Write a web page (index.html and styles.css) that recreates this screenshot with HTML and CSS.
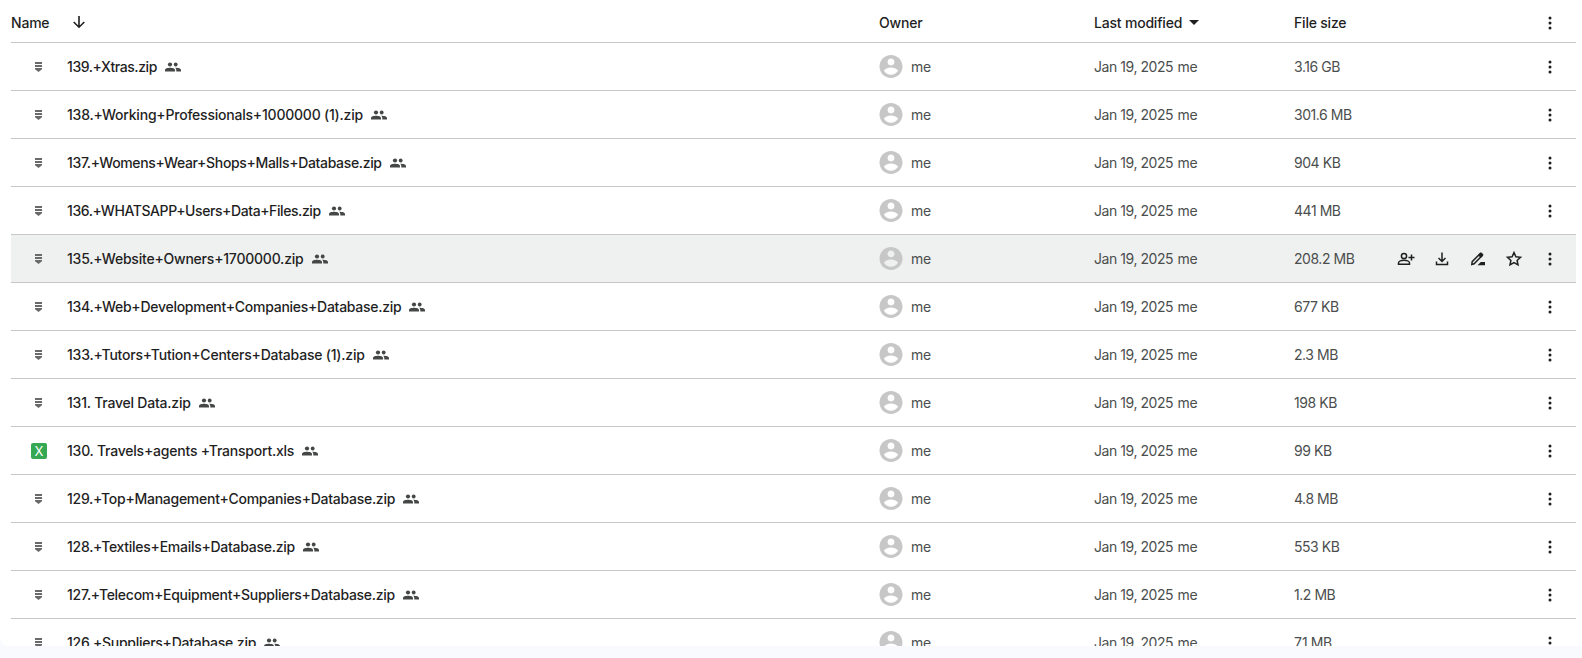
FILE: index.html
```html
<!DOCTYPE html>
<html lang="en">
<head>
  <meta charset="UTF-8" />
  <meta name="viewport" content="width=device-width, initial-scale=1.0"/>
  <title>Drive Files</title>
  <link rel="stylesheet" href="styles.css">
</head>
<body>

  <!-- icons used by the rows -->
  <svg class="sprite" xmlns="http://www.w3.org/2000/svg">
    <symbol id="zip" viewBox="0 0 16 16"><path d="M4 3h7v2H4zM4 6h7v2H4zM4 9h7v1.300L7.500 13 4 10.300z"/></symbol>
    <symbol id="people" viewBox="0 0 16 16"><circle cx="5" cy="5.500" r="2.100"/><circle cx="10.700" cy="5.500" r="1.900"/><path d="M0 12.500v-1.500C0 9.400 2.800 8.700 5 8.700s5 .7 5 2.300v1.500zM11.300 12.500v-1.500c0-.9-.4-1.700-1.100-2.200 2.300-.1 5.800.6 5.800 2.200v1.500z"/></symbol>
    <symbol id="user" viewBox="2 2 20 20"><path d="M12 2C6.480 2 2 6.480 2 12s4.480 10 10 10 10-4.480 10-10S17.520 2 12 2zm0 3c1.660 0 3 1.340 3 3s-1.340 3-3 3-3-1.340-3-3 1.340-3 3-3zm0 14.200c-2.500 0-4.710-1.280-6-3.220.03-1.990 4-3.080 6-3.080 1.990 0 5.970 1.090 6 3.080-1.290 1.940-3.500 3.220-6 3.220z"/></symbol>
    <symbol id="more" viewBox="0 0 20 20"><circle cx="10" cy="5" r="1.500"/><circle cx="10" cy="10" r="1.500"/><circle cx="10" cy="15" r="1.500"/></symbol>
  </svg>

  <div class="file-list">
    <div class="row header">
      <div class="name-title">Name
        <svg class="arrow" viewBox="0 0 16 16"><path d="M8 2v11M2.700 8 8 13.200 13.300 8"/></svg>
      </div>
      <div>Owner</div>
      <div class="sort">Last modified <span class="caret"></span></div>
      <div>File size</div>
      <div class="actions"><svg class="more"><use href="#more"/></svg></div>
    </div>

    <div class="row">
      <svg class="zip"><use href="#zip"/></svg>
      <div class="name tight"><span>139.+Xtras.zip</span><svg class="people"><use href="#people"/></svg></div>
      <div class="owner"><svg class="user"><use href="#user"/></svg>me</div>
      <div class="modified">Jan 19, 2025 <span>me</span></div>
      <div class="size">3.16 GB</div>
      <div class="actions"><svg class="more"><use href="#more"/></svg></div>
    </div>

    <div class="row">
      <svg class="zip"><use href="#zip"/></svg>
      <div class="name wide"><span>138.+Working+Professionals+1000000 (1).zip</span><svg class="people"><use href="#people"/></svg></div>
      <div class="owner"><svg class="user"><use href="#user"/></svg>me</div>
      <div class="modified">Jan 19, 2025 <span>me</span></div>
      <div class="size">301.6 MB</div>
      <div class="actions"><svg class="more"><use href="#more"/></svg></div>
    </div>

    <div class="row">
      <svg class="zip"><use href="#zip"/></svg>
      <div class="name snug"><span>137.+Womens+Wear+Shops+Malls+Database.zip</span><svg class="people"><use href="#people"/></svg></div>
      <div class="owner"><svg class="user"><use href="#user"/></svg>me</div>
      <div class="modified">Jan 19, 2025 <span>me</span></div>
      <div class="size">904 KB</div>
      <div class="actions"><svg class="more"><use href="#more"/></svg></div>
    </div>

    <div class="row">
      <svg class="zip"><use href="#zip"/></svg>
      <div class="name tight"><span>136.+WHATSAPP+Users+Data+Files.zip</span><svg class="people"><use href="#people"/></svg></div>
      <div class="owner"><svg class="user"><use href="#user"/></svg>me</div>
      <div class="modified">Jan 19, 2025 <span>me</span></div>
      <div class="size">441 MB</div>
      <div class="actions"><svg class="more"><use href="#more"/></svg></div>
    </div>

    <div class="row active">
      <svg class="zip"><use href="#zip"/></svg>
      <div class="name wide"><span>135.+Website+Owners+1700000.zip</span><svg class="people"><use href="#people"/></svg></div>
      <div class="owner"><svg class="user"><use href="#user"/></svg>me</div>
      <div class="modified">Jan 19, 2025 <span>me</span></div>
      <div class="size">208.2 MB</div>
      <div class="actions">
        <svg class="tool" viewBox="0 0 20 20"><circle cx="8" cy="7" r="2.600"/><path d="M2.500 15.300v-1.300c0-1.700 3-2.700 5.500-2.700s5.500 1 5.500 2.700v1.300zM15.500 5.500v6M12.500 8.500h6"/></svg>
        <svg class="tool" viewBox="0 0 20 20"><path d="M10 3.500v8.700M6.500 9l3.500 3.500L13.500 9M4.500 12.500v3h11v-3"/></svg>
        <svg class="tool" viewBox="0 0 20 20"><path d="m3.800 15.500.4-2.800 7.800-7.900q.8-.8 1.600 0l.4.4q.8.800 0 1.600l-7.900 8-2.300.7zM10.800 6l2 2"/><path class="solid" d="m9.500 16.300 3.300-3.300H17v3.300zM10.500 5.500 13 3.500l2.500 2.300-2 2.700z"/></svg>
        <svg class="tool star" viewBox="0 0 20 20"><path d="m10 3.600 1.900 4.200 4.600.5-3.400 3.100.9 4.500-4-2.300-4 2.300.9-4.500-3.400-3.100 4.600-.5z"/></svg>
        <svg class="more"><use href="#more"/></svg>
      </div>
    </div>

    <div class="row">
      <svg class="zip"><use href="#zip"/></svg>
      <div class="name"><span>134.+Web+Development+Companies+Database.zip</span><svg class="people"><use href="#people"/></svg></div>
      <div class="owner"><svg class="user"><use href="#user"/></svg>me</div>
      <div class="modified">Jan 19, 2025 <span>me</span></div>
      <div class="size">677 KB</div>
      <div class="actions"><svg class="more"><use href="#more"/></svg></div>
    </div>

    <div class="row">
      <svg class="zip"><use href="#zip"/></svg>
      <div class="name wide"><span>133.+Tutors+Tution+Centers+Database (1).zip</span><svg class="people"><use href="#people"/></svg></div>
      <div class="owner"><svg class="user"><use href="#user"/></svg>me</div>
      <div class="modified">Jan 19, 2025 <span>me</span></div>
      <div class="size">2.3 MB</div>
      <div class="actions"><svg class="more"><use href="#more"/></svg></div>
    </div>

    <div class="row">
      <svg class="zip"><use href="#zip"/></svg>
      <div class="name wide"><span>131. Travel Data.zip</span><svg class="people"><use href="#people"/></svg></div>
      <div class="owner"><svg class="user"><use href="#user"/></svg>me</div>
      <div class="modified">Jan 19, 2025 <span>me</span></div>
      <div class="size">198 KB</div>
      <div class="actions"><svg class="more"><use href="#more"/></svg></div>
    </div>

    <div class="row">
      <div class="xls">X</div>
      <div class="name wide"><span>130. Travels+agents +Transport.xls</span><svg class="people"><use href="#people"/></svg></div>
      <div class="owner"><svg class="user"><use href="#user"/></svg>me</div>
      <div class="modified">Jan 19, 2025 <span>me</span></div>
      <div class="size">99 KB</div>
      <div class="actions"><svg class="more"><use href="#more"/></svg></div>
    </div>

    <div class="row">
      <svg class="zip"><use href="#zip"/></svg>
      <div class="name"><span>129.+Top+Management+Companies+Database.zip</span><svg class="people"><use href="#people"/></svg></div>
      <div class="owner"><svg class="user"><use href="#user"/></svg>me</div>
      <div class="modified">Jan 19, 2025 <span>me</span></div>
      <div class="size">4.8 MB</div>
      <div class="actions"><svg class="more"><use href="#more"/></svg></div>
    </div>

    <div class="row">
      <svg class="zip"><use href="#zip"/></svg>
      <div class="name"><span>128.+Textiles+Emails+Database.zip</span><svg class="people"><use href="#people"/></svg></div>
      <div class="owner"><svg class="user"><use href="#user"/></svg>me</div>
      <div class="modified">Jan 19, 2025 <span>me</span></div>
      <div class="size">553 KB</div>
      <div class="actions"><svg class="more"><use href="#more"/></svg></div>
    </div>

    <div class="row">
      <svg class="zip"><use href="#zip"/></svg>
      <div class="name"><span>127.+Telecom+Equipment+Suppliers+Database.zip</span><svg class="people"><use href="#people"/></svg></div>
      <div class="owner"><svg class="user"><use href="#user"/></svg>me</div>
      <div class="modified">Jan 19, 2025 <span>me</span></div>
      <div class="size">1.2 MB</div>
      <div class="actions"><svg class="more"><use href="#more"/></svg></div>
    </div>

    <div class="row">
      <svg class="zip"><use href="#zip"/></svg>
      <div class="name"><span>126.+Suppliers+Database.zip</span><svg class="people"><use href="#people"/></svg></div>
      <div class="owner"><svg class="user"><use href="#user"/></svg>me</div>
      <div class="modified">Jan 19, 2025 <span>me</span></div>
      <div class="size">7.1 MB</div>
      <div class="actions"><svg class="more"><use href="#more"/></svg></div>
    </div>
  </div>

</body>
</html>
```

FILE: styles.css
```css
* {
  box-sizing: border-box;
}

body {
  margin: 0;
  height: 658px;
  overflow: hidden;
  background: #f8fafd;
  font-family: Inter, 'Liberation Sans', sans-serif;
  font-size: 14px;
  color: #4b4e4d;
}

.sprite {
  display: none;
}

.file-list {
  height: 646px;
  padding: 0 6px 0 11px;
  overflow: hidden;
  background: white;
  border-bottom-left-radius: 8px;
}

.row {
  height: 48px;
  padding-top: 1px;
  display: grid;
  grid-template-columns: 56px 812px 215px 200px 80px 1fr;
  align-items: center;
  border-bottom: 1px solid #c7c7c7;
  white-space: nowrap;
}

.header {
  height: 43px;
  padding-top: 3px;
  color: #1f1f1f;
  font-weight: 450;
  letter-spacing: -0.2px;
}

.name-title {
  grid-column: span 2;
  display: flex;
  align-items: center;
  gap: 22px;
}

.arrow {
  width: 16px;
  height: 16px;
  margin-top: -2px;
  fill: none;
  stroke: #1f1f1f;
  stroke-width: 1.6;
}

.sort {
  display: flex;
  align-items: center;
  gap: 7px;
}

.caret {
  border: 5px solid transparent;
  border-top-color: #1f1f1f;
  border-bottom: 0;
}

.active {
  background: #eff1f0;
}

.zip {
  width: 16px;
  height: 16px;
  margin-left: 20px;
  fill: #6a6a6a;
}

.xls {
  width: 16px;
  height: 16px;
  margin-left: 20px;
  border-radius: 2px;
  background: #34a853;
  color: white;
  font-size: 13px;
  line-height: 16px;
  text-align: center;
}

.name {
  display: flex;
  align-items: center;
  gap: 8px;
  color: #1f1f1f;
  font-weight: 450;
  letter-spacing: -0.27px;
}

.name span {
  padding-bottom: 1px;
}

.name.wide {
  letter-spacing: -0.22px;
}

.name.snug {
  letter-spacing: -0.34px;
}

.name.tight {
  letter-spacing: -0.42px;
}

.people {
  width: 16px;
  height: 16px;
  fill: #444746;
}

.owner {
  display: flex;
  align-items: center;
  gap: 8px;
  padding-bottom: 1px;
  letter-spacing: -0.2px;
}

.user {
  width: 24px;
  height: 23px;
  fill: #c7c7c7;
}

.modified,
.size {
  padding-bottom: 1px;
  letter-spacing: -0.45px;
}

.modified span {
  margin-left: 1px;
}

.actions {
  display: flex;
  justify-content: flex-end;
  align-items: center;
  gap: 16px;
  padding-right: 16px;
}

.more {
  width: 20px;
  height: 20px;
  fill: #1f1f1f;
}

.tool {
  width: 20px;
  height: 20px;
  fill: none;
  stroke: #1f1f1f;
  stroke-width: 1.5;
}

.tool .solid {
  fill: #1f1f1f;
  stroke: none;
}
```
